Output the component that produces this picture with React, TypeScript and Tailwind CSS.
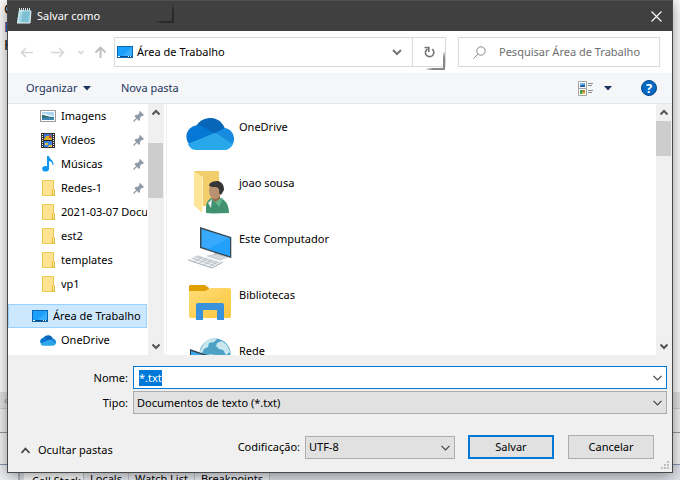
import { useEffect, useRef, type ReactNode } from "react";

function NotepadIcon() {
  return (
    <svg width="16" height="16" viewBox="0 0 16 16">
      <path d="M3 2h12l-1 13H1z" fill="#8ccbdd" />
      <path d="M3 2h4L5 15H1z" fill="#c3e6ef" />
      <path d="M1 15h13l1-12" fill="none" stroke="#e8f1f3" />
      <path d="M4 5h9M4 7h9M3 9h9M3 11h9M3 13h9" stroke="#5ba7bf" strokeWidth="0.6" />
      <path d="M3.5 0v3M5.5 0v3M7.5 0v3M9.5 0v3M11.5 0v3M13.5 0v3" stroke="#d9dfe1" />
    </svg>
  );
}

function DesktopIcon() {
  return (
    <svg width="16" height="12" viewBox="0 0 16 12" className="shrink-0">
      <rect x="0.5" y="0.5" width="15" height="11" fill="#1aa0fb" stroke="#0769b5" />
      <path d="M15 1v9H6z" fill="#38adfc" />
      <path d="M1 10.5h14" stroke="#0a4d86" />
      <path d="M1 10.5h2M11 10.5h1M13 10.5h1" stroke="#fff" />
    </svg>
  );
}

function PictureIcon() {
  return (
    <svg width="16" height="12" viewBox="0 0 16 12">
      <rect x="0.5" y="0.5" width="15" height="11" fill="#fff" stroke="#9a9a9a" />
      <path d="M2 2h12v8H2z" fill="#a9d3ee" />
      <path d="M2 4c3-1 5 0 7 1l5 1v1H2z" fill="#e1f1f8" />
      <path d="M2 5c3 0 5 2 12 2v1H2z" fill="#2d6b64" />
      <path d="M2 7.5h12V10H2z" fill="#3c84b5" />
    </svg>
  );
}

function VideoIcon() {
  return (
    <svg width="14" height="15" viewBox="0 0 14 15">
      <path d="M0 0h14v15H0z" fill="#333" />
      <path d="M1.5 1v13M12.500 1v13" stroke="#f2f2f2" strokeDasharray="1 1" />
      <path d="M3 1h8v6H3z" fill="#3272da" />
      <path d="M3 8h8v6H3z" fill="#3b82e4" />
      <path d="M5 3h4l2 2v2H3V6z" fill="#d9a92a" />
      <path d="M8 2h2v3H8z" fill="#d34428" />
      <path d="M4 10h3v2H4zM8 12h3v2H7z" fill="#e0c34c" />
      <path d="M3 7.500h8" stroke="#222" />
    </svg>
  );
}

function MusicIcon() {
  return (
    <svg width="12" height="16" viewBox="0 0 12 16">
      <ellipse cx="3.600" cy="12.800" rx="3.400" ry="2.800" fill="#0f96f0" />
      <path d="M5 0h2c0 3 5 4 4.500 9h-1C10.500 6.500 9 5.500 7 5v8H5z" fill="#0f96f0" />
    </svg>
  );
}

function FolderIcon() {
  return (
    <svg width="13" height="16" viewBox="0 0 13 16">
      <path d="M0.500 0.500h11v9l1 1v5H0.500z" fill="#ffe391" stroke="#e9c654" />
      <path d="M10.500 15V10l1-1 1 1v5z" fill="#fff0bb" stroke="#e2b93b" />
    </svg>
  );
}

function PinIcon() {
  return (
    <svg width="11" height="11" viewBox="0 0 11 11">
      <path d="M7 0l4 4-1 1-1-.3L7.200 6.500 7 9 6 10 1.500 5.200 2.500 4l2.500-.2L6.500 2 6 1z" fill="#8d99a5" />
      <path d="M4 7L0.500 10.500" stroke="#8d99a5" strokeWidth="1.300" />
    </svg>
  );
}

function CloudIcon({ small = false }: { small?: boolean }) {
  return (
    <svg width={small ? 16 : 48} height={small ? 11 : 32} viewBox="0 0 48 32">
      <path d="M10 8C14 2 19 0 25 0c7 0 12 5 14 11L29 16z" fill="#0866b9" />
      <path d="M29 15l10-5c5 1 9 5 9 11 0 3-1 5-2 6z" fill="#168bdf" />
      <path d="M3 26C-3 18 2 8 11 7.500c3 0 6 1 8 2.500l10 5.500z" fill="#0478d4" />
      <path d="M2 26l27-11 18 11c-2 4-5 6-9 6H10c-4 0-7-3-8-6z" fill="#28a8ea" />
    </svg>
  );
}

function UserIcon() {
  return (
    <svg width="48" height="48" viewBox="0 0 48 48">
      <path d="M8 5h25v35H8z" fill="#f2cd6c" />
      <path d="M8 5l9 6v34l-2 1-7-7z" fill="#ffe597" />
      <path d="M16.500 11v34" stroke="#fff2c3" />
      <path d="M20 47v-7c1-6 5-9 10-9 8 1 13 6 13 16-8 0-16 1-23 0z" fill="#409271" />
      <path d="M25 33l4 3 4 5 4-9z" fill="#67b491" />
      <path d="M26 33l-1 9-3-5z" fill="#e7edf1" />
      <path d="M26 29h8v4l-5 3-3-3z" fill="#936b4b" />
      <ellipse cx="29" cy="25" rx="6" ry="8" fill="#b99170" />
      <path d="M23 20c0-4 5-5 9-5 4 1 6 4 6 9l-3 5-2-2c1-4-1-6-4-6-2 0-4 0-6-1z" fill="#363636" />
    </svg>
  );
}

function MonitorIcon() {
  return (
    <svg width="48" height="48" viewBox="0 0 48 48">
      <path d="M28 29l8 2v4h-8z" fill="#b7bec5" />
      <path d="M21 34l10-2 11 3-8 3z" fill="#d3d8dc" stroke="#a9b2b9" strokeWidth="0.500" />
      <path d="M14 5l31 10v21L14 26z" fill="#384852" />
      <path d="M15.500 7L44 16v18L15.500 25z" fill="#38a9fd" />
      <path d="M44 16v18l-23-7z" fill="#22a0fc" />
      <path d="M45 15l1 .5V36l-1 .5z" fill="#c2cbd0" />
      <path d="M2 38l9-5 26 7-11 6z" fill="#eceff1" />
      <path d="M6 36l22 7.500M8.500 34.500l22 7.500M11 34l22 7M8 40l8-5M13 41.500l8-5M18 43l8-5M23 45l8-5" stroke="#a5adb5" strokeWidth="0.600" />
      <path d="M2 38l24 8 11-6" fill="none" stroke="#a9b2b9" />
    </svg>
  );
}

function LibraryIcon() {
  return (
    <svg width="48" height="48" viewBox="0 0 48 48">
      <defs>
        <linearGradient id="folder" x2="1" y2="1">
          <stop stopColor="#ffdd78" />
          <stop offset="1" stopColor="#fac63c" />
        </linearGradient>
      </defs>
      <path d="M3 8q0-1 1-1h15l4 3v4H3z" fill="#dfa000" />
      <path d="M3 13h16l6-3h18q2 0 2 2v26q0 2-2 2H5q-2 0-2-2z" fill="url(#folder)" />
      <path d="M10 42V27q0-2 2-2h24q2 0 2 2v15h-7V32H17v10z" fill="#3992db" />
    </svg>
  );
}

function NetworkIcon() {
  return (
    <svg width="48" height="48" viewBox="0 0 48 48">
      <circle cx="29" cy="20" r="15.500" fill="#4ca1c5" />
      <path d="M17 11c3-5 8-7 14-6l-3 3-5 1-1 4-4 2-3 6-2-2zM31 9l5-2 5 4 3 7-4 3-3-5-4-1-3-3z" fill="#c8e7ee" />
      <path d="M23 20l7 1 3 4-3 8H20z" fill="#b8dfea" />
      <path d="M4 15l17 6v15L4 29z" fill="#35424b" />
      <path d="M5 17l15 5v12L5 28z" fill="#39a9ed" />
    </svg>
  );
}

function Chevron({ className = "" }: { className?: string }) {
  return (
    <svg width="9" height="6" viewBox="0 0 9 6" className={className} fill="none" stroke="currentColor" strokeWidth="1.200">
      <path d="M0.500 0.800l4 4 4-4" />
    </svg>
  );
}

function BoldChevron({ up = false }: { up?: boolean }) {
  return (
    <svg width="8" height="7" viewBox="0 0 8 7" fill="none" stroke="#555" strokeWidth="2">
      <path d={up ? "M0.500 5.500L4 2l3.500 3.500" : "M0.500 1.500L4 5l3.500-3.500"} />
    </svg>
  );
}

function Caret() {
  return (
    <svg width="8" height="5" viewBox="0 0 8 5">
      <path d="M0 0h8L4 4.500z" fill="#1c335e" />
    </svg>
  );
}

type Place = { label: string; icon: ReactNode; pinned?: boolean };

const places: Place[] = [
  { label: "Imagens", icon: <PictureIcon />, pinned: true },
  { label: "Vídeos", icon: <VideoIcon />, pinned: true },
  { label: "Músicas", icon: <MusicIcon />, pinned: true },
  { label: "Redes-1", icon: <FolderIcon />, pinned: true },
  { label: "2021-03-07 Documentos", icon: <FolderIcon /> },
  { label: "est2", icon: <FolderIcon /> },
  { label: "templates", icon: <FolderIcon /> },
  { label: "vp1", icon: <FolderIcon /> },
];

const items: Place[] = [
  { label: "OneDrive", icon: <CloudIcon /> },
  { label: "joao sousa", icon: <UserIcon /> },
  { label: "Este Computador", icon: <MonitorIcon /> },
  { label: "Bibliotecas", icon: <LibraryIcon /> },
  { label: "Rede", icon: <NetworkIcon /> },
];

function PlaceRow({ label, icon, pinned }: Place) {
  return (
    <li>
      <button className="flex h-6 w-full items-center gap-[5px] pl-8 text-left">
        <span className="flex w-4 shrink-0 justify-center">{icon}</span>
        <span className="min-w-0 flex-1 overflow-hidden whitespace-nowrap">{label}</span>
        {pinned && (
          <span className="pr-[3px]">
            <PinIcon />
          </span>
        )}
      </button>
    </li>
  );
}

function Scrollbar({ thumb }: { thumb: string }) {
  return (
    <div className="flex w-4 shrink-0 flex-col bg-[#f0f0f0]">
      <span className="flex h-[17px] shrink-0 items-center justify-center">
        <BoldChevron up />
      </span>
      <div className="flex-1">
        <div className={thumb} />
      </div>
      <span className="flex h-[17px] shrink-0 items-center justify-center">
        <BoldChevron />
      </span>
    </div>
  );
}

function Backdrop() {
  return (
    <div aria-hidden="true" className="absolute inset-0 flex flex-col overflow-hidden bg-[#eef0f4]">
      <div className="flex h-[433px] shrink-0 flex-col border-b border-[#999] bg-white">
        <div className="flex-1 pl-1 text-sm leading-[18px] text-black">
          <p>C</p>
          <p className="text-[#123c94]">E</p>
          <p>H</p>
        </div>
        <div className="flex h-4 items-center bg-[#e6e6e6] pl-1 text-[#999]">‹</div>
        <div className="h-6 border-t border-[#ccc] bg-[#f2f2f2]" />
      </div>
      <div className="h-8 shrink-0 border-b border-[#8798ad] bg-[#f5f5f7]" />
      <div className="ml-[18px] flex h-8 shrink-0 border-l-2 border-[#b4b8c0] bg-[#dfe2e9] pl-1 text-black">
        {["Call Stack", "Locals", "Watch List", "Breakpoints"].map((tab, i) => (
          <span
            key={tab}
            className={
              i === 0
                ? "h-8 w-[60px] border-r border-[#c2c6ce] bg-white pt-2 pl-2 whitespace-nowrap"
                : "h-8 border-r border-[#c2c6ce] bg-[#eceef3] px-[6px] pt-[6px] whitespace-nowrap"
            }
          >
            {tab}
          </span>
        ))}
      </div>
    </div>
  );
}

export default function App() {
  const nameRef = useRef<HTMLInputElement>(null);

  useEffect(() => {
    nameRef.current?.focus();
    nameRef.current?.select();
  }, []);

  return (
    <div className="relative h-screen overflow-hidden font-['Noto_Sans','Open_Sans',sans-serif] text-[11px] leading-4 text-black">
      <Backdrop />
      <div
        role="dialog"
        aria-labelledby="title"
        className="relative mx-[7px] flex flex-col border-x border-b border-[#484848] bg-[#f0f0f0] shadow-[0_2px_14px_rgba(0,0,0,0.45)]"
      >
        <header className="relative flex h-[31px] items-center gap-[5px] border-t border-[#505050] bg-[#404040] pr-[10px] pl-2 text-white">
          <NotepadIcon />
          <h1 id="title" className="flex-1">Salvar como</h1>
          <button aria-label="Fechar">
            <svg width="11" height="11" viewBox="0 0 11 11" stroke="#fff" strokeWidth="1.100">
              <path d="M0.500 0.500l10 10M10.500 0.500l-10 10" />
            </svg>
          </button>
          <span className="absolute top-1 left-[148px] h-[18px] w-[18px] border-r-2 border-b-2 border-[#292929] [mask-image:linear-gradient(135deg,transparent_45%,black_65%)]" />
        </header>

        <nav className="flex h-[42px] items-center bg-white pr-3 pl-3">
          <div className="flex w-[94px] shrink-0 items-center text-[#d5d5d5]">
            <button aria-label="Voltar" className="w-7">
              <svg width="14" height="11" viewBox="0 0 14 11" fill="none" stroke="currentColor" strokeWidth="1.500">
                <path d="M13 5.500H2M6 1L1.500 5.500 6 10" />
              </svg>
            </button>
            <button aria-label="Avançar" className="w-7 pl-[3px]">
              <svg width="14" height="11" viewBox="0 0 14 11" fill="none" stroke="currentColor" strokeWidth="1.500">
                <path d="M0 5.500h12M8 1l4.500 4.500L8 10" />
              </svg>
            </button>
            <button aria-label="Locais recentes" className="w-[18px] pl-[2px]">
              <svg width="6" height="5" viewBox="0 0 6 5" fill="none" stroke="currentColor" strokeWidth="1.500">
                <path d="M0.500 1L3 3.500 5.500 1" />
              </svg>
            </button>
            <button aria-label="Acima" className="text-[#bdbdbd]">
              <svg width="13" height="12" viewBox="0 0 13 12" fill="none" stroke="currentColor" strokeWidth="1.900">
                <path d="M6.500 12V2M1.500 6.500l5-5 5 5" />
              </svg>
            </button>
          </div>
          <div className="relative flex h-[30px] min-w-0 flex-1 items-center border border-[#d9d9d9] pl-[2px]">
            <DesktopIcon />
            <span className="flex-1 pl-1">Área de Trabalho</span>
            <button aria-label="Histórico" className="w-[30px]">
              <svg width="10" height="7" viewBox="0 0 10 7" fill="none" stroke="#777" strokeWidth="2" className="mx-auto">
                <path d="M1 1l4 4 4-4" />
              </svg>
            </button>
            <button aria-label="Atualizar" className="flex h-full w-[33px] items-center justify-center border-l border-[#d9d9d9]">
              <svg width="11" height="12" viewBox="0 0 11 12" fill="none" stroke="#777" strokeWidth="1.700">
                <path d="M8.200 3.200A4.200 4.200 0 1 1 3.500 2.900M0.500 1.500h4.300V6" />
              </svg>
            </button>
            <span className="absolute right-0 -bottom-1 h-[18px] w-5 border-r-2 border-b-2 border-[#888] [mask-image:linear-gradient(135deg,transparent_45%,black_65%)]" />
          </div>
          <label className="ml-3 flex h-[30px] w-[202px] shrink-0 items-center border border-[#d9d9d9] pl-[14px]">
            <svg width="13" height="13" viewBox="0 0 13 13" fill="none" stroke="#8b8b8b">
              <circle cx="8" cy="5" r="4.200" />
              <path d="M5 8L0.500 12.500" />
            </svg>
            <input
              type="search"
              aria-label="Pesquisar"
              placeholder="Pesquisar Área de Trabalho"
              className="ml-[13px] min-w-0 flex-1 bg-transparent outline-none placeholder:text-[#6d6d6d]"
            />
          </label>
        </nav>

        <div className="flex h-[31px] items-center border-b border-[#e4e6e9] bg-[#f5f6f7] pr-[15px] pl-[18px] text-[#1c335e]">
          <button className="flex w-[95px] items-center gap-[6px]">
            Organizar <Caret />
          </button>
          <button className="flex-1 text-left">Nova pasta</button>
          <button aria-label="Exibição" className="mr-[29px] flex items-center gap-[10px]">
            <svg width="16" height="15" viewBox="0 0 16 15">
              <path d="M0.500 0.500h8v14h-8zM0.500 7.500h8" fill="#fff" stroke="#a5a5a5" />
              <path d="M2 2h5v4H2z" fill="#71b8ee" />
              <path d="M2 4.500l5-1V6H2z" fill="#2358a5" />
              <path d="M2 9h3v4H2z" fill="#40a449" />
              <path d="M5 9h2v2H5z" fill="#df6642" />
              <path d="M4 11h3v2H4z" fill="#d8b94b" />
              <path d="M10 2.500h5M10 4.500h4M10 9.500h5M10 11.500h4" stroke="#8e8e8e" />
            </svg>
            <Caret />
          </button>
          <button aria-label="Ajuda">
            <span className="flex size-4 items-center justify-center rounded-full border border-[#03488c] bg-[#0568c1] text-[13px] leading-4 font-bold text-white">?</span>
          </button>
        </div>

        <div className="flex h-[251px] bg-white">
          <aside className="flex w-[156px] shrink-0">
            <ul className="min-w-0 flex-1 overflow-hidden pr-px">
              {places.map((place) => (
                <PlaceRow key={place.label} {...place} />
              ))}
              <li className="mt-2">
                <button className="flex h-6 w-full items-center gap-[5px] border border-[#99d1ff] bg-[#cce8ff] pl-[23px] whitespace-nowrap">
                  <DesktopIcon />
                  Área de Trabalho
                </button>
              </li>
              <PlaceRow label="OneDrive" icon={<CloudIcon small />} />
            </ul>
            <Scrollbar thumb="mt-[22px] h-[55px] w-[15px] bg-[#cdcdcd]" />
          </aside>
          <ul className="ml-[2px] min-w-0 flex-1 overflow-hidden border-l border-[#f0f0f0] pt-[6px] pl-[19px]">
            {items.map(({ label, icon }) => (
              <li key={label} className="flex h-14 gap-[5px]">
                <span className="flex size-12 shrink-0 items-center justify-center">{icon}</span>
                <span className="pt-[9px]">{label}</span>
              </li>
            ))}
          </ul>
          <Scrollbar thumb="h-[35px] w-[15px] bg-[#cdcdcd]" />
        </div>

        <form className="px-[5px] pt-[11px]" onSubmit={(e) => e.preventDefault()}>
          <div className="grid grid-cols-[115px_1fr] items-center gap-x-[5px] gap-y-[2px]">
            <label htmlFor="name" className="text-right">Nome:</label>
            <div className="flex h-[23px] items-center border border-[#0078d7] bg-white pr-1 pl-[5px]">
              <input
                id="name"
                ref={nameRef}
                defaultValue="*.txt"
                className="h-4 min-w-0 flex-1 bg-transparent outline-none selection:bg-[#0078d7] selection:text-white"
              />
              <Chevron className="text-[#444]" />
            </div>
            <label htmlFor="type" className="text-right">Tipo:</label>
            <div className="relative">
              <select id="type" className="block h-[23px] w-full appearance-none border border-[#adadad] bg-[#e1e1e1] pl-[3px]">
                <option>Documentos de texto (*.txt)</option>
              </select>
              <Chevron className="pointer-events-none absolute top-[9px] right-[5px] text-[#444]" />
            </div>
          </div>
          <div className="mt-[21px] mb-[13px] flex h-6 items-center pr-[13px] pl-2">
            <button type="button" className="mt-[6px] flex items-center gap-2">
              <svg width="9" height="7" viewBox="0 0 9 7" fill="none" stroke="#444" strokeWidth="1.800">
                <path d="M0.500 6l4-4.500 4 4.500" />
              </svg>
              Ocultar pastas
            </button>
            <label htmlFor="encoding" className="ml-auto">Codificação:</label>
            <div className="relative ml-[5px] w-[150px]">
              <select id="encoding" className="block h-[23px] w-full appearance-none border border-[#adadad] bg-[#e1e1e1] pl-[3px]">
                <option>UTF-8</option>
              </select>
              <Chevron className="pointer-events-none absolute top-[9px] right-[5px] text-[#444]" />
            </div>
            <button type="submit" className="ml-[13px] h-6 w-[86px] border-2 border-[#0078d7] bg-[#e1e1e1]">Salvar</button>
            <button type="button" className="ml-[14px] h-6 w-[86px] border border-[#adadad] bg-[#e1e1e1]">Cancelar</button>
          </div>
        </form>
        <svg width="9" height="9" viewBox="0 0 9 9" fill="#bfbfbf" className="absolute right-[2px] bottom-[2px]">
          <path d="M6 0h2v2H6zM3 3h2v2H3zM6 3h2v2H6zM0 6h2v2H0zM3 6h2v2H3zM6 6h2v2H6z" />
        </svg>
      </div>
    </div>
  );
}
